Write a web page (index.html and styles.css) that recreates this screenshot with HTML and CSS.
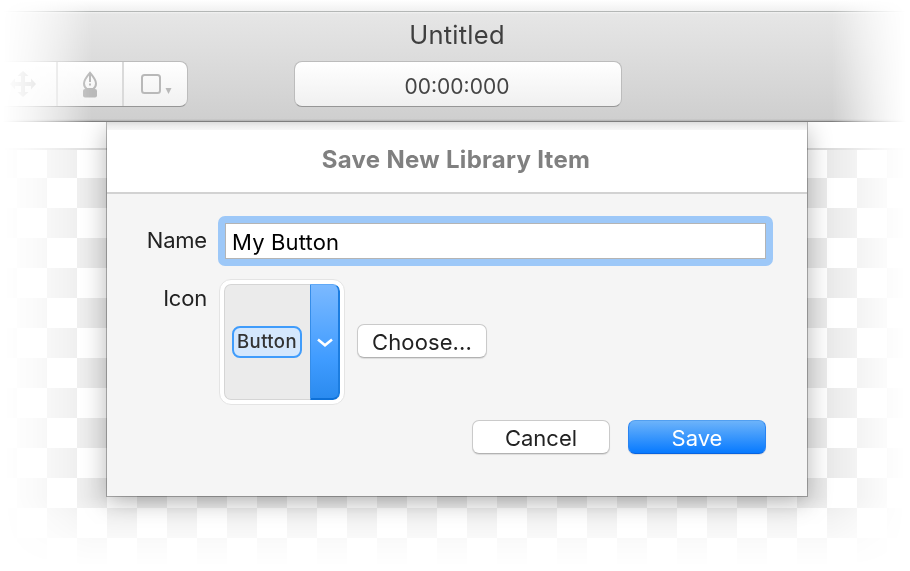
FILE: index.html
```
<!DOCTYPE html>
<html lang="en">
<head>
<meta charset="utf-8">
<title>Untitled</title>
<link rel="stylesheet" href="styles.css">
</head>
<body>
<div class="stage">
  <div class="window">
    <header class="toolbar">
      <h1 class="doc-title"><span>Untitled</span></h1>
      <div class="tools">
        <div class="segments">
          <div class="segment segment-move">
            <svg width="26" height="26" viewBox="0 0 26 26"><path fill="#b0b0b0" d="M13 0l5.500 5H15v6h6V7.500l5 5.500-5 5.500V15h-6v6h3.500L13 26l-5.500-5H11v-6H5v3.500L0 13l5-5.500V11h6V5H7.500z"/></svg>
          </div>
          <div class="segment segment-pen">
            <svg width="14" height="27" viewBox="0 0 14 27"><path fill="none" stroke="#b9b9b9" stroke-width="2" d="M7 1.800C4.500 5 1 8.700 1 12.400c0 2.800 1.200 4.400 2.800 5.600h6.400c1.600-1.200 2.800-2.800 2.800-5.600C13 8.700 9.500 5 7 1.800z"/><path fill="#b9b9b9" d="M6 2h2v9H6zM6 12.500h2v2H6z"/><rect x="0" y="18" width="14" height="8.500" rx="2" fill="#b9b9b9"/></svg>
          </div>
          <div class="segment segment-shape">
            <svg width="31" height="21" viewBox="0 0 31 21"><rect x="1" y="1" width="18" height="18" rx="2.500" fill="none" stroke="#b9b9b9" stroke-width="2"/><path fill="#b9b9b9" d="M24.500 14h6l-3 6z"/></svg>
          </div>
        </div>
        <div class="timer"><span>00:00:000</span></div>
      </div>
    </header>
    <div class="ruler"></div>
    <div class="canvas"></div>
  </div>

  <section class="sheet">
    <h2 class="sheet-title"><span>Save New Library Item</span></h2>
    <div class="form">
      <label class="label label-name"><span>Name</span></label>
      <div class="field"><span>My Button</span></div>
      <label class="label label-icon"><span>Icon</span></label>
      <div class="icon-row">
        <div class="well">
          <div class="well-inner">
            <div class="preview"><div class="chip"><span>Button</span></div></div>
            <div class="well-menu">
              <svg width="16" height="10" viewBox="0 0 16 10"><path fill="none" stroke="#fff" stroke-width="2.600" d="M1 1.500l7 5.700 7-5.700"/></svg>
            </div>
          </div>
        </div>
        <div class="button choose"><span>Choose...</span></div>
      </div>
    </div>
    <div class="actions">
      <div class="button cancel"><span>Cancel</span></div>
      <div class="button save"><span>Save</span></div>
    </div>
  </section>
</div>
</body>
</html>
```
FILE: styles.css
```
* { box-sizing: border-box; }
body {
  margin: 0;
  background: #fff;
  font-family: Inter, "Liberation Sans", sans-serif;
  font-size: 22px;
  color: #222;
}
span { white-space: nowrap; }
svg { display: block; }
h1, h2 { margin: 0; font-weight: 400; }

.stage {
  position: relative;
  width: 910px;
  height: 571px;
  overflow: hidden;
  -webkit-mask-image: linear-gradient(to right, transparent 3px, rgba(0,0,0,.1) 17px, rgba(0,0,0,.22) 32px, rgba(0,0,0,.38) 47px, rgba(0,0,0,.6) 65px, rgba(0,0,0,.8) 78px, #000 92px, #000 832px, rgba(0,0,0,.8) 845px, rgba(0,0,0,.55) 860px, rgba(0,0,0,.32) 875px, rgba(0,0,0,.15) 890px, transparent 906px), linear-gradient(to bottom, #000 497px, rgba(0,0,0,.55) 520px, rgba(0,0,0,.2) 545px, transparent 567px);
  -webkit-mask-composite: source-in;
  mask-composite: intersect;
}
.window {
  height: 571px;
  padding-top: 11px;
  background: linear-gradient(#fff, #f1f1f1 11px, #fff 11px);
}

.toolbar {
  height: 111px;
  border-top: 1px solid #b4b7b6;
  border-bottom: 1px solid #7f7f7f;
  background: linear-gradient(#f3f3f3, #e6e6e6 2px, #cfcfcf 107px, #b0b0b0 109px);
}
.doc-title {
  height: 49px;
  padding: 8px 0 0 4px;
  text-align: center;
  font-size: 25.500px;
  letter-spacing: .25px;
  line-height: 30px;
  color: #3f3f3f;
}
.tools { display: flex; }
.segments {
  display: flex;
  width: 188px;
  height: 46px;
  margin-right: 106px;
  border: 1px solid #bcbcbc;
  border-bottom-color: #969696;
  border-left: 0;
  border-radius: 0 8px 8px 0;
  background: linear-gradient(#fff, #f1f1f1);
}
.segment { display: flex; padding-top: 9px; justify-content: center; }
.segment-move { width: 58px; padding-right: 10px; border-right: 2px solid #dadada; }
.segment-pen { width: 66px; border-right: 2px solid #dadada; }
.segment-shape { width: 63px; padding: 12px 0 0 2px; }
.timer {
  width: 328px;
  height: 46px;
  border: 1px solid #bcbcbc;
  border-bottom-color: #969696;
  border-radius: 8px;
  background: linear-gradient(#fff, #f0f0f0);
  text-align: center;
  padding-right: 2px;
  font-size: 21px;
  line-height: 49px;
  color: #444;
}
.ruler { height: 28px; border-bottom: 2px solid #dcdcdc; }
.canvas {
  height: 421px;
  background: repeating-conic-gradient(#ebebeb 0 25%, #fff 0 50%) 17px -2px / 60px 60px;
}

.sheet {
  position: absolute;
  left: 107px;
  top: 122px;
  width: 700px;
  height: 374px;
  background: #f5f5f5;
  box-shadow: 0 0 0 1px rgba(0,0,0,.27), 0 8px 24px rgba(0,0,0,.3);
  clip-path: inset(0 -100px -100px -100px);
}
.sheet-title {
  height: 72px;
  border-bottom: 2px solid #d2d2d2;
  background: linear-gradient(#dedede, #eee 4px, #f7f7f7 8px, #fff 8px);
  text-align: center;
  padding-right: 2px;
  font-size: 24px;
  letter-spacing: .3px;
  line-height: 75px;
  font-weight: 700;
  color: #808080;
}
.form {
  display: grid;
  grid-template-columns: 100px 555px;
  grid-template-rows: 50px 126px;
  column-gap: 11px;
  row-gap: 13px;
  padding-top: 22px;
}
.label { text-align: right; line-height: 49px; letter-spacing: -.2px; }
.label-icon { line-height: 39px; }
.field {
  border: 7px solid #9dc8f8;
  border-radius: 7px;
  background: #fff;
  box-shadow: inset 0 0 0 1px #b4b4b4;
  padding-left: 7px;
  line-height: 38px;
  letter-spacing: .15px;
  color: #000;
}
.icon-row { display: flex; align-items: center; gap: 12px; padding-left: 1px; }
.well {
  width: 126px;
  height: 126px;
  padding: 4px;
  border: 1px solid #e4e4e4;
  border-radius: 12px;
  background: #fff;
}
.well-inner {
  display: flex;
  width: 116px;
  height: 116px;
  border-radius: 7px;
  overflow: hidden;
  background: #ebebeb;
}
.preview {
  display: flex;
  flex: 1;
  align-items: center;
  padding-left: 7px;
  border: 1px solid #d5d5d5;
  border-right: 0;
  border-radius: 7px 0 0 7px;
}
.chip {
  width: 70px;
  height: 32px;
  border: 2px solid #409cfb;
  border-radius: 8px;
  background: #d4e7fd;
  text-align: center;
  font-size: 18.500px;
  font-weight: 500;
  letter-spacing: .4px;
  line-height: 27px;
  color: #333;
}
.chip span { display: inline-block; filter: blur(.6px); }
.well-menu {
  display: flex;
  width: 30px;
  align-items: center;
  justify-content: center;
  padding-top: 3px;
  border: 2px solid;
  border-width: 1px 2px 2px 1px;
  border-color: #61a9f7 #1c7de0 #0d70d7 #358de9;
  border-radius: 0 7px 7px 0;
  background: linear-gradient(#7bb9ff, #409cff 65%, #2b8bef);
}
.button {
  height: 34px;
  border: 1px solid #cacaca;
  border-bottom-color: #b2b2b2;
  border-radius: 7px;
  background: #fff;
  box-shadow: 0 1px 1px rgba(0,0,0,.1);
  text-align: center;
  line-height: 35px;
}
.choose { width: 130px; margin-bottom: 2px; letter-spacing: .1px; }
.actions { display: flex; justify-content: flex-end; gap: 18px; padding: 15px 41px 0 0; }
.cancel, .save { width: 138px; }
.save {
  border-color: #529ff0 #2883f2 #0863df;
  background: linear-gradient(#6cb3fa, #077aff);
  color: #fff;
}
```
